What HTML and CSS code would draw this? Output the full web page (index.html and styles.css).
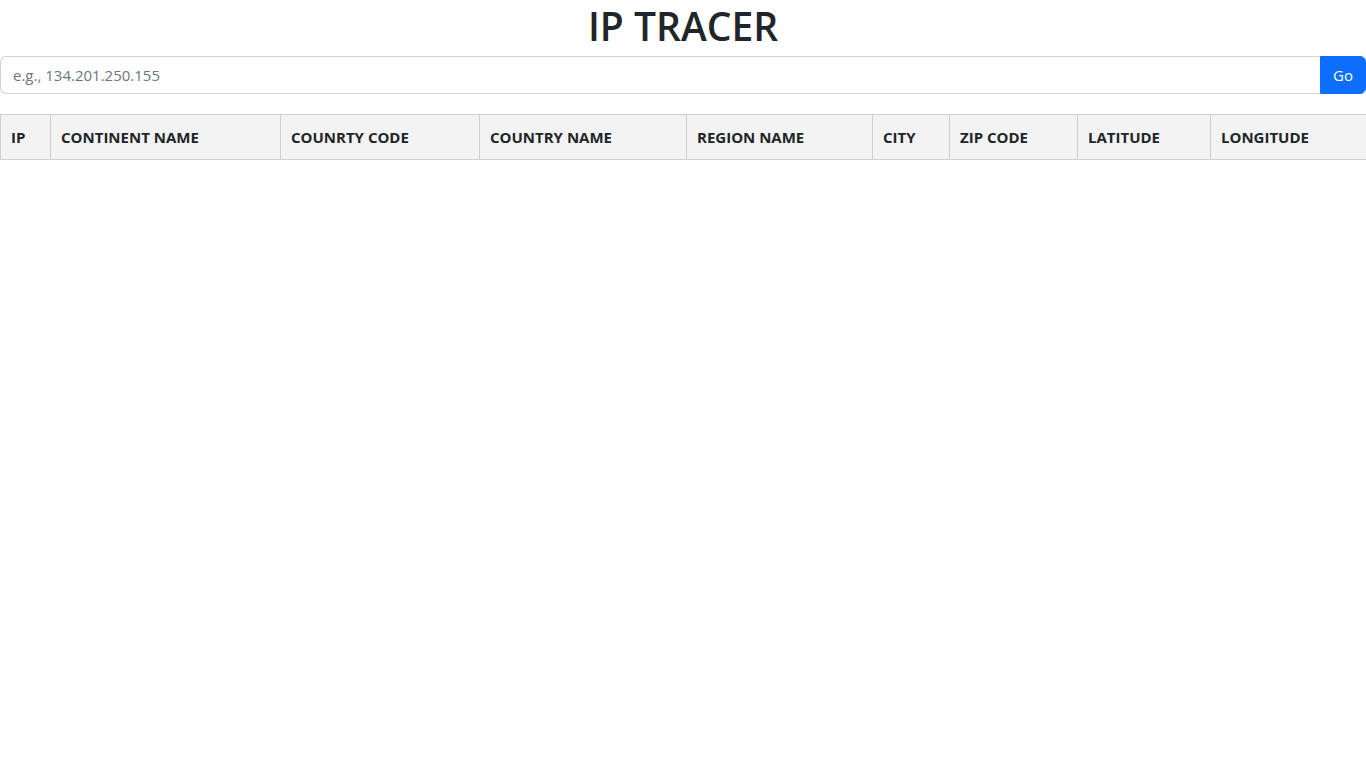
FILE: index.html
```html
<!DOCTYPE html>
<html lang="en">
<head>
<meta charset="utf-8">
<title>IP Tracer</title>
<link rel="stylesheet" href="styles.css">
</head>
<body>
<h1 class="title">IP TRACER</h1>
<form class="search">
  <input class="search-input" type="text" placeholder="e.g., 134.201.250.155">
  <button class="search-btn" type="button">Go</button>
</form>
<table class="results">
  <colgroup>
    <col class="c-ip"><col class="c-cont"><col class="c-cc"><col class="c-cn"><col class="c-reg"><col class="c-city"><col class="c-zip"><col class="c-lat"><col class="c-lng">
  </colgroup>
  <thead>
    <tr>
      <th>IP</th>
      <th>CONTINENT NAME</th>
      <th>COUNRTY CODE</th>
      <th>COUNTRY NAME</th>
      <th>REGION NAME</th>
      <th>CITY</th>
      <th>ZIP CODE</th>
      <th>LATITUDE</th>
      <th>LONGITUDE</th>
    </tr>
  </thead>
  <tbody></tbody>
</table>
</body>
</html>
```

FILE: styles.css
```css
* { box-sizing: border-box; }
body {
  margin: 0;
  font-family: "Open Sans", "Noto Sans", sans-serif;
  font-size: 16px;
  line-height: 1.5;
  color: #212529;
  background: #fff;
}
.title {
  margin: 0 0 6px;
  padding-top: 2px;
  font-size: 39px;
  font-weight: 600;
  line-height: 48px;
  text-align: center;
}
.search {
  display: flex;
  margin: 0;
}
.search-input {
  flex: 1;
  height: 38px;
  padding: 6px 12px;
  font: inherit;
  font-size: 15px;
  color: #212529;
  border: 1px solid #ced4da;
  border-right: none;
  border-radius: 6px 0 0 6px;
  outline: none;
}
.search-input::placeholder { color: #6c757d; }
.search-btn {
  width: 46px;
  height: 38px;
  padding: 6px 10px;
  font: inherit;
  font-size: 15px;
  color: #fff;
  background: #0d6efd;
  border: 1px solid #0d6efd;
  border-radius: 0 6px 6px 0;
}
.results {
  width: 100%;
  margin-top: 20px;
  border-collapse: collapse;
  table-layout: fixed;
}
.results th {
  padding: 10px 10px;
  text-align: left;
  font-size: 15px;
  font-weight: 700;
  line-height: 24px;
  background: #f3f3f3;
  border: 1px solid #cfcfcf;
  white-space: nowrap;
}
.c-ip { width: 50px; }
.c-cont { width: 230px; }
.c-cc { width: 199px; }
.c-cn { width: 207px; }
.c-reg { width: 186px; }
.c-city { width: 77px; }
.c-zip { width: 128px; }
.c-lat { width: 133px; }
.c-lng { width: 156px; }
```
